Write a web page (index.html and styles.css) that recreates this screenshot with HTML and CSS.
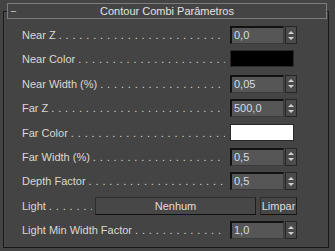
FILE: index.html
```html
<!DOCTYPE html>
<html>
<head>
	<title>Contour Combi Parâmetros</title>
	<link rel="stylesheet" href="styles.css">
</head>
<body>
	<div class="rollout">
		<div class="title">
			<span class="toggle">–</span>
			<span class="caption">Contour Combi Parâmetros</span>
			<span></span>
		</div>

		<div class="rows">
			<div class="row">
				<span class="label">Near Z</span><span class="dots"></span>
				<div class="ctl">
					<div class="spin-field">0,0</div>
					<div class="spin-btns"><span class="up"></span><span class="down"></span></div>
				</div>
			</div>

			<div class="row">
				<span class="label">Near Color</span><span class="dots"></span>
				<div class="ctl"><div class="swatch black"></div></div>
			</div>

			<div class="row">
				<span class="label">Near Width (%)</span><span class="dots"></span>
				<div class="ctl">
					<div class="spin-field">0,05</div>
					<div class="spin-btns"><span class="up"></span><span class="down"></span></div>
				</div>
			</div>

			<div class="row">
				<span class="label">Far Z</span><span class="dots"></span>
				<div class="ctl">
					<div class="spin-field">500,0</div>
					<div class="spin-btns"><span class="up"></span><span class="down"></span></div>
				</div>
			</div>

			<div class="row">
				<span class="label">Far Color</span><span class="dots"></span>
				<div class="ctl"><div class="swatch white"></div></div>
			</div>

			<div class="row">
				<span class="label">Far Width (%)</span><span class="dots"></span>
				<div class="ctl">
					<div class="spin-field">0,5</div>
					<div class="spin-btns"><span class="up"></span><span class="down"></span></div>
				</div>
			</div>

			<div class="row">
				<span class="label">Depth Factor</span><span class="dots"></span>
				<div class="ctl">
					<div class="spin-field">0,5</div>
					<div class="spin-btns"><span class="up"></span><span class="down"></span></div>
				</div>
			</div>

			<div class="row">
				<span class="label">Light</span><span class="dots short"></span>
				<button class="btn pick">Nenhum</button>
				<button class="btn clear">Limpar</button>
			</div>

			<div class="row">
				<span class="label">Light Min Width Factor</span><span class="dots"></span>
				<div class="ctl">
					<div class="spin-field">1,0</div>
					<div class="spin-btns"><span class="up"></span><span class="down"></span></div>
				</div>
			</div>
		</div>
	</div>
</body>
</html>
```

FILE: styles.css
```css
body {
	margin: 0;
	background-color: #444444;
	font-family: "Liberation Sans", Arial, sans-serif;
	font-size: 11px;
	color: #d9d9cf;
}

.rollout {
	box-sizing: border-box;
	height: 237px;
	margin: 11px 6px 0 3px;
	border: 1px solid #181818;
	box-shadow: inset 1px 1px 0 #4c4c4c;
}

.title {
	box-sizing: border-box;
	height: 16px;
	margin: -9px 1px 0 3px;
	border: 1px solid #7d7d7d;
	background-color: #444444;
	display: grid;
	grid-template-columns: 1fr auto 1fr;
	align-items: center;
	color: #e2e2e2;
}

.toggle {
	font-size: 9px;
	padding-left: 3px;
	line-height: 12px;
}

.caption {
	line-height: 14px;
}

.rows {
	padding: 7px 0 0 18px;
	display: flex;
	flex-direction: column;
	gap: 6.4px;
}

.row {
	width: 275px;
	height: 18px;
	display: flex;
	align-items: center;
}

.label {
	white-space: nowrap;
}

.dots {
	flex: 1;
	overflow: hidden;
	white-space: nowrap;
	margin: 0 5px 0 3px;
	letter-spacing: 0.4px;
}

.dots::after {
	content: ". . . . . . . . . . . . . . . . . . . . . . . . . . . . . . . . . . . . . .";
}

.dots.short {
	margin-right: 3px;
}

.ctl {
	width: 67px;
	height: 18px;
	display: flex;
}

.spin-field {
	box-sizing: border-box;
	width: 54px;
	height: 18px;
	padding-left: 2px;
	border-top: 2px solid #121212;
	border-left: 2px solid #121212;
	border-right: 1px solid #3a3a3a;
	border-bottom: 1px solid #3a3a3a;
	background-color: #565656;
	color: #d5dce4;
	line-height: 15px;
}

.spin-btns {
	box-sizing: border-box;
	width: 12px;
	height: 18px;
	margin-left: 1px;
	border: 1px solid #262626;
	background-color: #4b4b4b;
	display: flex;
	flex-direction: column;
	align-items: center;
	justify-content: center;
	gap: 3px;
}

.up {
	width: 0;
	height: 0;
	border-left: 3px solid transparent;
	border-right: 3px solid transparent;
	border-bottom: 3px solid #cfcfcf;
}

.down {
	width: 0;
	height: 0;
	border-left: 3px solid transparent;
	border-right: 3px solid transparent;
	border-top: 3px solid #cfcfcf;
}

.swatch {
	box-sizing: border-box;
	width: 64px;
	height: 17px;
	border: 1px solid #2a2a2a;
}

.swatch.black {
	background-color: #000000;
}

.swatch.white {
	background-color: #ffffff;
}

.btn {
	box-sizing: border-box;
	height: 18px;
	padding: 0;
	font-family: inherit;
	font-size: 11px;
	color: #dedede;
	background-color: #474747;
	border: 1px solid #2e2e2e;
	border-bottom-color: #111111;
	border-right-color: #1c1c1c;
}

.btn.pick {
	width: 161px;
	margin-right: 4px;
}

.btn.clear {
	width: 37px;
}
```
